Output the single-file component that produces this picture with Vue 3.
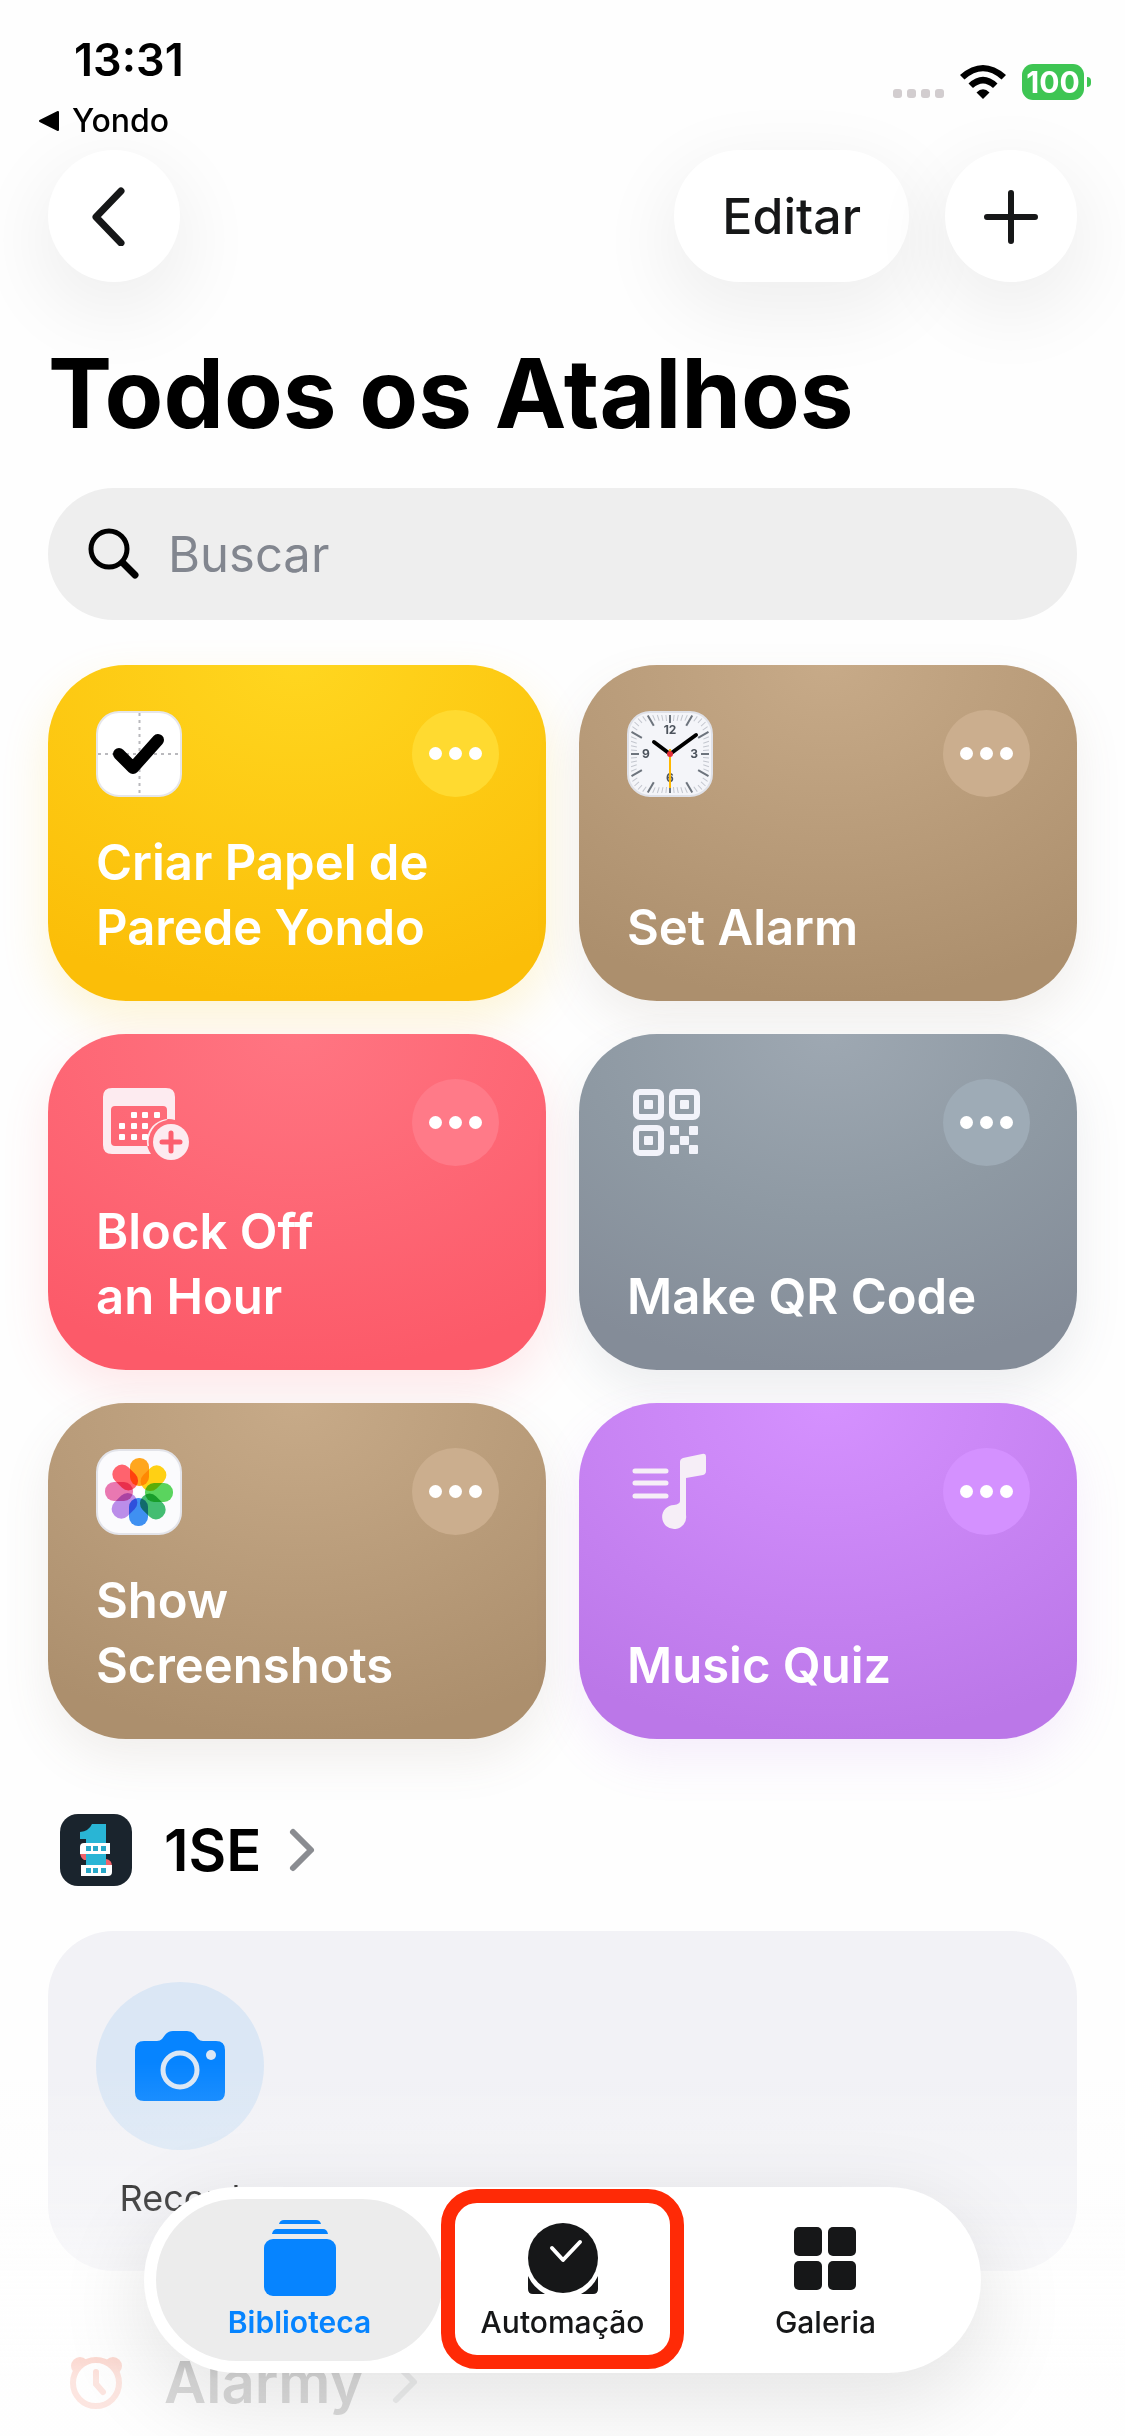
<script setup>
import { ref } from 'vue'

const query = ref('')

const shortcuts = [
  { title: ['Criar Papel de', 'Parede Yondo'], tone: 'yellow', icon: 'check' },
  { title: ['Set Alarm'], tone: 'brown', icon: 'clock' },
  { title: ['Block Off', 'an Hour'], tone: 'red', icon: 'calendar' },
  { title: ['Make QR Code'], tone: 'gray', icon: 'qr' },
  { title: ['Show', 'Screenshots'], tone: 'brown', icon: 'photos' },
  { title: ['Music Quiz'], tone: 'purple', icon: 'music' },
]

const majorTicks = [0, 30, 60, 90, 120, 150, 180, 210, 240, 270, 300, 330]
const minorTicks = Array.from({ length: 60 }, (_, i) => i * 6).filter((a) => a % 30 !== 0)
// Distance from the centre to the rounded-square rim along a given angle
function rim(angle) {
  const a = (angle * Math.PI) / 180
  const n = 5
  return 39 / Math.pow(Math.abs(Math.sin(a)) ** n + Math.abs(Math.cos(a)) ** n, 1 / n)
}

const petals = ['#ff9f0a', '#ffcc00', '#4cd150', '#34b866', '#2e86f0', '#b583e8', '#e86cab', '#ff5562']
const calendarDots = [[31, 25], [42, 25], [54, 25], [19, 36], [31, 36], [42, 36], [19, 47], [31, 47], [42, 47]]
</script>

<template>
  <div class="screen">
    <header>
      <div class="status">
        <div class="status-left">
          <time class="clock">13:31</time>
          <a href="#" class="return">
            <svg width="22" height="22" viewBox="0 0 22 22" aria-hidden="true">
              <path d="M2 11 20 2V20Z" fill="#000" stroke="#000" stroke-width="2" stroke-linejoin="round" />
            </svg>
            Yondo
          </a>
        </div>
        <div class="status-right">
          <span class="signal"><i></i><i></i><i></i><i></i></span>
          <svg class="wifi" width="46" height="34" viewBox="0 0 46 34" aria-hidden="true">
            <path d="M23 34 16.500 27.500Q23 21 29.500 27.500Z" />
            <path d="M8.500 18.500Q23 5 37.500 18.500L33 23Q23 14 13 23Z" />
            <path d="M0 10Q23-10 46 10L41.500 14.500Q23-2 4.500 14.500Z" />
          </svg>
          <span class="battery">100</span>
        </div>
      </div>
      <nav class="toolbar" aria-label="Ações">
        <button type="button" class="round" aria-label="Voltar">
          <svg width="60" height="60" viewBox="0 0 60 60" fill="none" aria-hidden="true">
            <path d="M37 5 12 31 37 57" stroke="#161718" stroke-width="7" stroke-linecap="round" stroke-linejoin="round" />
          </svg>
        </button>
        <button type="button" class="edit">Editar</button>
        <button type="button" class="round" aria-label="Adicionar">
          <svg width="60" height="60" viewBox="0 0 60 60" fill="none" aria-hidden="true">
            <path d="M30 7V55M6 31H54" stroke="#161718" stroke-width="6" stroke-linecap="round" />
          </svg>
        </button>
      </nav>
    </header>

    <main>
      <h1>Todos os Atalhos</h1>

      <label class="search">
        <svg width="52" height="52" viewBox="0 0 52 52" fill="none" stroke="#000" aria-hidden="true">
          <circle cx="21" cy="21" r="18" stroke-width="5" />
          <path d="M35 35 47 47" stroke-width="7" stroke-linecap="round" />
        </svg>
        <input v-model="query" type="search" placeholder="Buscar" aria-label="Buscar" />
      </label>

      <section class="grid" aria-label="Atalhos">
        <article v-for="item in shortcuts" :key="item.icon" class="card" :class="item.tone">
          <div class="card-top">
            <svg v-if="item.icon === 'check'" width="86" height="86" viewBox="0 0 86 86" fill="none" aria-hidden="true">
              <rect x="1" y="1" width="84" height="84" rx="22" fill="#fff" stroke="#e6e6ea" stroke-width="2" />
              <path d="M43.500 2V84M2 43H84" stroke="#b9b9bd" stroke-width="2" stroke-dasharray="3 4" />
              <path d="M23 43 37 57 62 29" stroke="#000" stroke-width="12" stroke-linecap="round" stroke-linejoin="round" />
            </svg>

            <svg v-else-if="item.icon === 'clock'" width="86" height="86" viewBox="0 0 86 86" aria-hidden="true">
              <rect x="1" y="1" width="84" height="84" rx="22" fill="#f4f5f9" stroke="#dfe1e8" stroke-width="2" />
              <g transform="translate(43 43)">
                <line v-for="a in minorTicks" :key="a" :transform="`rotate(${a})`" x1="0" x2="0" :y1="-rim(a)" :y2="6 - rim(a)" stroke="#c3c6ce" stroke-width="1" />
                <line v-for="a in majorTicks" :key="a" :transform="`rotate(${a})`" x1="0" x2="0" :y1="-rim(a)" :y2="(a % 90 ? 12 : 8) - rim(a)" stroke="#6d747d" stroke-width="2" />
                <g class="digits">
                  <text x="0" y="-20">12</text>
                  <text x="24" y="4">3</text>
                  <text x="0" y="28">6</text>
                  <text x="-24" y="4">9</text>
                </g>
                <path d="M0 0-16-12M0 0 26-19" stroke="#000" stroke-width="4" stroke-linecap="round" />
                <path d="M0-5V34" stroke="#ffb800" stroke-width="2" />
                <circle r="3" fill="#e2303c" />
              </g>
            </svg>

            <svg v-else-if="item.icon === 'calendar'" width="100" height="86" viewBox="0 0 100 86" aria-hidden="true">
              <g transform="translate(7 8)">
                <path fill="#fdebf0" fill-rule="evenodd" d="M9 0H63Q72 0 72 9V32A22 22 0 0 0 48 66H9Q0 66 0 57V9Q0 0 9 0ZM12 18Q8 18 8 22V54Q8 58 12 58H46A22 22 0 0 1 64 32V22Q64 18 60 18Z" />
                <rect v-for="(d, i) in calendarDots" :key="i" :x="d[0] - 3" :y="d[1] - 1" width="6" height="6" rx="1" fill="#fff" />
                <circle cx="68" cy="54" r="18" fill="#fdebf0" />
                <path d="M68 45V63M59 54H77" stroke="#fc5f6e" stroke-width="5" stroke-linecap="round" />
              </g>
            </svg>

            <svg v-else-if="item.icon === 'qr'" width="86" height="86" viewBox="0 0 86 86" aria-hidden="true">
              <g transform="translate(6 9)" fill="#f2f3fa">
                <g v-for="p in [[0, 0], [36, 0], [0, 36]]" :key="p.join()" :transform="`translate(${p[0]} ${p[1]})`">
                  <rect x="3" y="3" width="25" height="25" rx="4" fill="none" stroke="#f2f3fa" stroke-width="6" />
                  <rect x="11" y="11" width="9" height="9" rx="1" />
                </g>
                <rect v-for="p in [[37, 37], [56, 37], [47, 47], [37, 56], [56, 56]]" :key="p.join()" :x="p[0]" :y="p[1]" width="9" height="9" rx="1" />
              </g>
            </svg>

            <svg v-else-if="item.icon === 'photos'" width="86" height="86" viewBox="0 0 86 86" aria-hidden="true">
              <rect x="1" y="1" width="84" height="84" rx="22" fill="#fbfbfd" stroke="#e3e4ea" stroke-width="2" />
              <g transform="translate(43 43)" class="petals">
                <rect v-for="(c, i) in petals" :key="c" x="-9" y="-34" width="19" height="28" rx="9" :fill="c" :transform="`rotate(${i * 45})`" />
                <circle r="5" fill="#fff" />
              </g>
            </svg>

            <svg v-else width="86" height="86" viewBox="0 0 86 86" fill="none" aria-hidden="true">
              <path d="M8 22H39M8 34H39M8 47H39" stroke="#f6eef7" stroke-width="5" stroke-linecap="round" />
              <path fill="#f6eef7" d="M53 13Q53 10 56 9L75 5Q79 4 79 8V22Q79 25 76 26L59 29V66A12 12 0 1 1 47 56Q53 55 53 52Z" />
            </svg>

            <button type="button" class="more" aria-label="Mais opções"><i></i><i></i><i></i></button>
          </div>
          <h2><span v-for="line in item.title" :key="line">{{ line }}</span></h2>
        </article>
      </section>

      <section class="app">
        <h2>
          <a href="#">
            <svg width="72" height="72" viewBox="0 0 72 72" aria-hidden="true">
              <rect width="72" height="72" rx="18" fill="#1a242d" />
              <path fill="#f0636b" d="M20 38H28V46H24Q20 43 20 38ZM46 45Q52 46 52 52H44Z" />
              <path fill="#29b5d5" d="M32 10H46V56H26V25H20V18Q29 17 32 10Z" />
              <path fill="#fff" d="M24 29H50V40H20V33Q20 29 24 29ZM21 51H52V58Q52 62 48 62H21Z" />
              <path fill="#29a9c9" d="M26 32H31V37H26ZM33 32H38V37H33ZM41 32H46V37H41ZM26 54H31V59H26ZM33 54H38V59H33ZM41 54H46V59H41Z" />
            </svg>
            <span>1SE</span>
            <svg class="chevron" width="30" height="50" viewBox="0 0 30 50" fill="none" aria-hidden="true">
              <path d="M6 7 24 25 6 43" stroke="#8a8c91" stroke-width="6" stroke-linecap="round" stroke-linejoin="round" />
            </svg>
          </a>
        </h2>
        <div class="panel">
          <button type="button" class="action">
            <span class="disc">
              <svg width="90" height="70" viewBox="0 0 90 70" aria-hidden="true">
                <path fill="#0684ff" d="M9 10H22Q25 10 27 8L30 4Q33 0 38 0H52Q57 0 60 4L63 8Q65 10 68 10H81Q90 10 90 19V61Q90 70 81 70H9Q0 70 0 61V19Q0 10 9 10Z" />
                <circle cx="45" cy="39" r="17" fill="none" stroke="#dbe7f5" stroke-width="5" />
                <circle cx="76" cy="24" r="5" fill="#dbe7f5" />
              </svg>
            </span>
            <span>Record</span>
          </button>
        </div>
      </section>

      <section class="app">
        <h2>
          <a href="#">
            <svg width="72" height="72" viewBox="0 0 72 72" fill="none" aria-hidden="true">
              <circle cx="20" cy="20" r="9" fill="#f0502c" />
              <circle cx="53" cy="20" r="9" fill="#f0502c" />
              <circle cx="36" cy="37" r="23" fill="#fff" stroke="#f0502c" stroke-width="6" />
              <path d="M36 26V38L43 46" stroke="#f0502c" stroke-width="6" stroke-linecap="round" />
            </svg>
            <span>Alarmy</span>
            <svg class="chevron" width="30" height="50" viewBox="0 0 30 50" fill="none" aria-hidden="true">
              <path d="M6 7 24 25 6 43" stroke="#8a8c91" stroke-width="6" stroke-linecap="round" stroke-linejoin="round" />
            </svg>
          </a>
        </h2>
      </section>
    </main>

    <div class="dock">
      <nav class="tabs" aria-label="Seções">
        <a href="#" class="tab selected" aria-current="page">
          <svg width="76" height="80" viewBox="0 0 76 80" fill="#0684ff" aria-hidden="true">
            <path d="M17 7Q18 3 22 3H54Q58 3 59 7ZM10 17Q11 12 15 12H61Q65 12 66 17Z" />
            <rect x="2" y="22" width="72" height="57" rx="9" />
          </svg>
          Biblioteca
        </a>
        <a href="#" class="tab highlighted">
          <svg width="76" height="80" viewBox="0 0 76 80" fill="#161718" aria-hidden="true">
            <path d="M3 59A39 39 0 0 0 20 77H8Q3 77 3 72ZM73 59A39 39 0 0 1 56 77H68Q73 77 73 72Z" />
            <circle cx="38" cy="41" r="35" />
            <path d="M27 31 38 43 55 25" fill="none" stroke="#fff" stroke-width="4" stroke-linecap="round" stroke-linejoin="round" />
          </svg>
          Automação
        </a>
        <a href="#" class="tab">
          <svg width="76" height="80" viewBox="0 0 76 80" fill="#161718" aria-hidden="true">
            <rect x="6" y="10" width="28" height="29" rx="5" />
            <rect x="40" y="10" width="28" height="29" rx="5" />
            <rect x="6" y="44" width="28" height="29" rx="5" />
            <rect x="40" y="44" width="28" height="29" rx="5" />
          </svg>
          Galeria
        </a>
      </nav>
    </div>
  </div>
</template>

<style>
body {
  background: #fefefe;
}
</style>

<style scoped>
.screen {
  box-sizing: border-box;
  min-height: 100vh;
  padding: 0 48px;
  font-family: Inter, "Liberation Sans", sans-serif;
  color: #000;
}
a {
  color: inherit;
  text-decoration: none;
}
button {
  border: 0;
  padding: 0;
  font: inherit;
  color: inherit;
  background: none;
}
h1,
h2 {
  margin: 0;
}
svg {
  flex: none;
  display: block;
}

.status {
  display: flex;
  justify-content: space-between;
  height: 150px;
}
.status-left {
  display: flex;
  flex-direction: column;
  padding-top: 34px;
}
.clock {
  padding-left: 26px;
  font-size: 45px;
  line-height: 52px;
  font-weight: 600;
}
.return {
  display: flex;
  align-items: center;
  gap: 12px;
  margin: 15px 0 0 -10px;
  font-size: 32px;
  line-height: 40px;
  font-weight: 500;
}
.status-right {
  display: flex;
  align-items: center;
  height: 36px;
  margin: 64px -14px 0 0;
}
.signal {
  display: flex;
  gap: 5px;
  margin: 22px 16px 0 0;
}
.signal i {
  width: 9px;
  height: 9px;
  border-radius: 3px;
  background: #d2cdcf;
}
.battery {
  position: relative;
  margin: 0 7px 0 16px;
  width: 62px;
  border-radius: 11px;
  background: #3ec553;
  color: #fff;
  font-size: 30px;
  line-height: 36px;
  font-weight: 700;
  text-align: center;
}
.battery::after {
  content: "";
  position: absolute;
  right: -7px;
  top: 13px;
  width: 4px;
  height: 10px;
  border-radius: 0 4px 4px 0;
  background: #3ec553;
}

.toolbar {
  display: flex;
  gap: 36px;
}
.toolbar button {
  display: flex;
  align-items: center;
  justify-content: center;
  height: 132px;
  border-radius: 66px;
  background: #fff;
  box-shadow: 0 24px 72px 12px rgba(0, 0, 0, 0.06);
}
.round {
  width: 132px;
}
.edit {
  margin-left: auto;
  padding: 0 48px;
  color: #161718;
  font-size: 50px;
  font-weight: 500;
}

h1 {
  margin-top: 51px;
  font-size: 96px;
  line-height: 120px;
  font-weight: 700;
}
.search {
  display: flex;
  align-items: center;
  gap: 28px;
  height: 132px;
  margin-top: 35px;
  padding: 0 40px;
  border-radius: 66px;
  background: #eee;
}
.search input {
  flex: 1;
  min-width: 0;
  border: 0;
  padding: 0;
  outline: 0;
  background: none;
  font: inherit;
  font-size: 49px;
}
.search input::placeholder {
  color: #82868f;
  opacity: 1;
}

.grid {
  display: grid;
  grid-template-columns: 1fr 1fr;
  gap: 33px;
  margin-top: 45px;
}
.card {
  display: flex;
  flex-direction: column;
  justify-content: space-between;
  box-sizing: border-box;
  min-height: 336px;
  padding: 45px 47px 41px 48px;
  border-radius: 78px;
  color: #fff;
}
.yellow {
  --more: #ffda30;
  background: radial-gradient(90% 100% at 50% 0, #ffd61f, #fbbe08);
  box-shadow: 0 20px 48px rgba(251, 190, 8, 0.16);
}
.brown {
  --more: #cbae8e;
  background: radial-gradient(90% 100% at 50% 0, #c7aa88, #ac8f6d);
  box-shadow: 0 20px 48px rgba(120, 100, 80, 0.1);
}
.red {
  --more: #ff7a88;
  background: radial-gradient(90% 100% at 50% 0, #ff7582, #fc5a69);
  box-shadow: 0 20px 48px rgba(252, 90, 105, 0.14);
}
.gray {
  --more: #9eabb6;
  background: radial-gradient(90% 100% at 50% 0, #9ea8b2, #8e99a3 55%, #848c98);
  box-shadow: 0 20px 48px rgba(80, 90, 105, 0.1);
}
.purple {
  --more: #d491ff;
  background: radial-gradient(90% 100% at 50% 0, #d591ff, #bb77e8);
  box-shadow: 0 20px 48px rgba(185, 118, 231, 0.12);
}
.card-top {
  display: flex;
  align-items: center;
  justify-content: space-between;
}
.more {
  display: flex;
  align-items: center;
  justify-content: center;
  gap: 7px;
  width: 87px;
  height: 87px;
  border-radius: 50%;
  background: var(--more);
}
.more i {
  width: 13px;
  height: 13px;
  border-radius: 50%;
  background: #fff;
}
.card h2 {
  font-size: 49px;
  line-height: 65px;
  font-weight: 600;
}
.card h2 span {
  display: block;
}
.digits {
  fill: #4c535c;
  font-size: 12px;
  font-weight: 700;
  text-anchor: middle;
}
.petals {
  isolation: isolate;
}
.petals rect {
  mix-blend-mode: multiply;
  opacity: 0.92;
}

.app {
  margin-top: 75px;
}
.app h2 {
  font-size: 58px;
  line-height: 72px;
  font-weight: 600;
}
.app h2 a {
  display: flex;
  align-items: center;
  gap: 32px;
  padding-left: 12px;
}
.chevron {
  margin-left: -6px;
}
.panel {
  box-sizing: border-box;
  min-height: 340px;
  margin-top: 45px;
  padding: 51px 48px;
  border-radius: 66px;
  background: #f2f2f6;
}
.action {
  display: flex;
  flex-direction: column;
  align-items: center;
  gap: 26px;
  font-size: 36px;
  line-height: 44px;
}
.disc {
  display: flex;
  align-items: center;
  justify-content: center;
  width: 168px;
  height: 168px;
  border-radius: 50%;
  background: #dbe7f5;
}

.dock {
  position: fixed;
  left: 0;
  right: 0;
  bottom: 0;
  display: flex;
  justify-content: center;
  padding: 127px 0 63px;
  background: linear-gradient(rgba(254, 254, 254, 0), rgba(254, 254, 254, 0.3) 40%, rgba(254, 254, 254, 0.86) 85%);
}
.tabs {
  display: flex;
  padding: 12px;
  border-radius: 93px;
  background: #fff;
  box-shadow: 0 24px 84px 8px rgba(0, 0, 0, 0.1);
}
.tab {
  position: relative;
  display: flex;
  flex-direction: column;
  align-items: center;
  gap: 7px;
  box-sizing: border-box;
  width: 287px;
  height: 162px;
  padding-top: 18px;
  border-radius: 81px;
  color: #161718;
  font-size: 30px;
  line-height: 36px;
  font-weight: 500;
}
.tab + .tab {
  margin-left: -24px;
}
.selected {
  background: #ececec;
  color: #0684ff;
  font-weight: 600;
}
.highlighted::after {
  content: "";
  position: absolute;
  inset: -10px 22px -8px;
  border: 14px solid #ff2a06;
  border-radius: 36px;
}
</style>
